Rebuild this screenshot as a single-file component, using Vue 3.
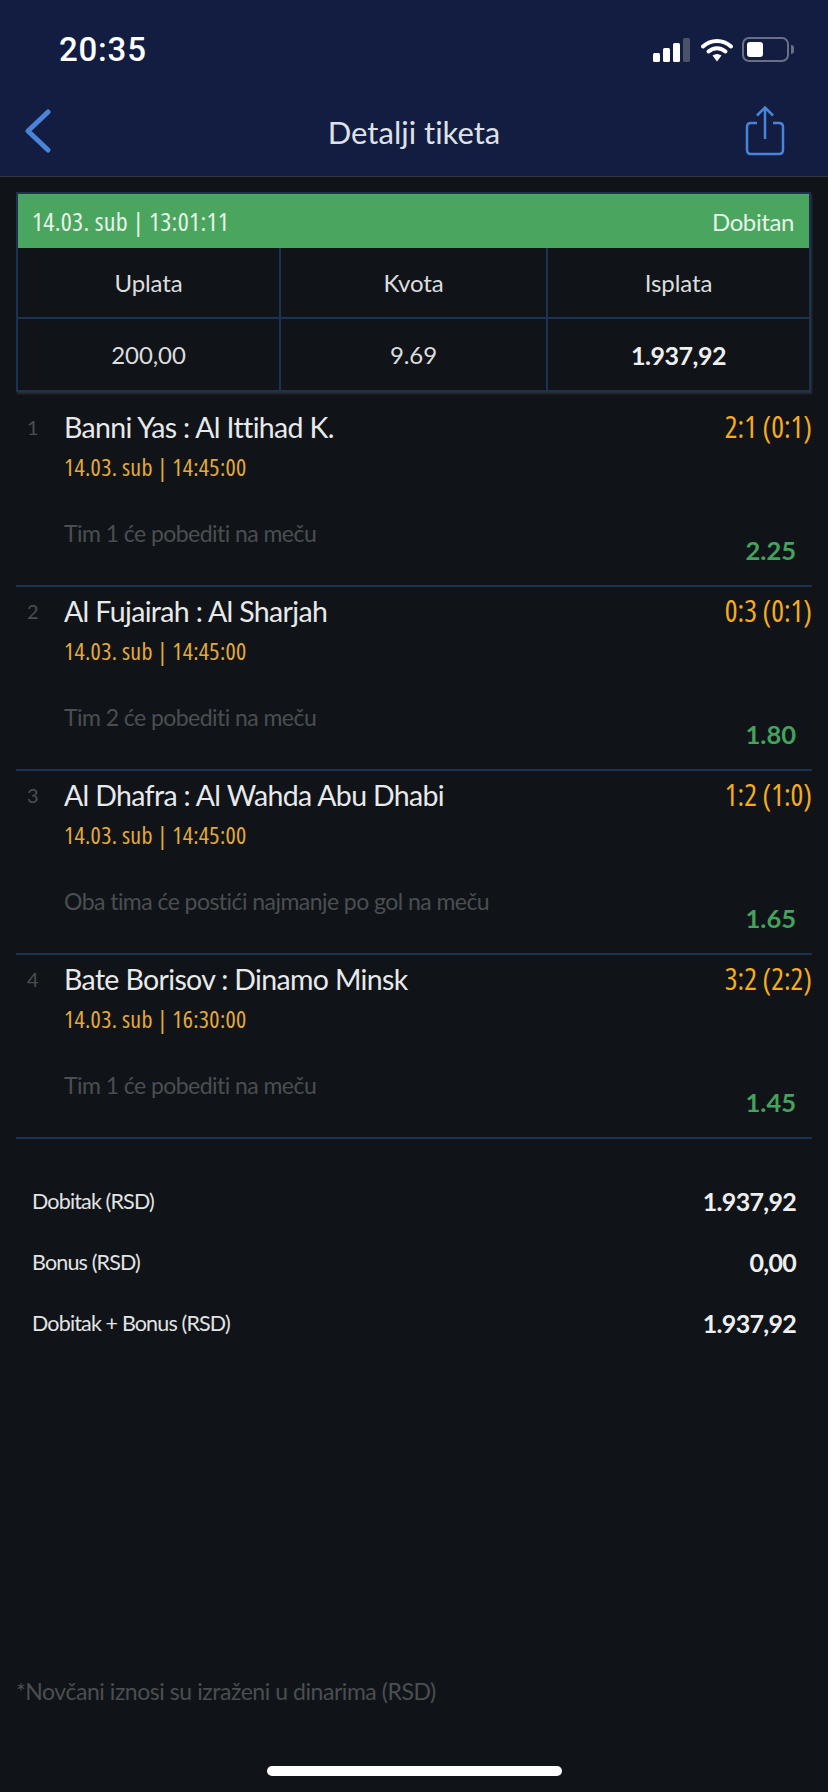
<template>
  <div class="page">
    <header class="header">
      <div class="status-bar">
        <span class="time">20:35</span>
        <div class="status-icons">
          <svg class="signal" width="38" height="24" viewBox="0 0 38 24">
            <rect x="0" y="15" width="7" height="9" rx="1.5" fill="#fff" />
            <rect x="10" y="10" width="7" height="14" rx="1.5" fill="#fff" />
            <rect x="20" y="5" width="7" height="19" rx="1.5" fill="#fff" />
            <rect x="30" y="0" width="7" height="24" rx="1.5" fill="#4a5268" />
          </svg>
          <svg class="wifi" width="32" height="24" viewBox="0 0 32 24">
            <path d="M2 8.500C10 1 22 1 30 8.500" fill="none" stroke="#fff" stroke-width="4" stroke-linecap="round" />
            <path d="M7.500 13.500C12.500 9 19.500 9 24.500 13.500" fill="none" stroke="#fff" stroke-width="4" stroke-linecap="round" />
            <path d="M11.500 17.500C14.500 15.500 17.500 15.500 20.500 17.500L16 23.500Z" fill="#fff" />
          </svg>
          <div class="battery">
            <div class="battery-fill"></div>
          </div>
          <div class="battery-nub"></div>
        </div>
      </div>
      <div class="nav-bar">
        <button class="nav-button">
          <svg width="28" height="44" viewBox="0 0 28 44">
            <path d="M24 3L4 22L24 41" fill="none" stroke="#4a84d8" stroke-width="5" stroke-linecap="round" stroke-linejoin="round" />
          </svg>
        </button>
        <h1 class="title">Detalji tiketa</h1>
        <button class="nav-button nav-button-right">
          <svg width="40" height="50" viewBox="0 0 40 50">
            <path d="M12 17H6Q2 17 2 21V44Q2 48 6 48H34Q38 48 38 44V21Q38 17 34 17H28" fill="none" stroke="#4a84d8" stroke-width="2.500" />
            <path d="M20 33V2M12 9.500L20 1.500L28 9.500" fill="none" stroke="#4a84d8" stroke-width="2.500" />
          </svg>
        </button>
      </div>
    </header>

    <main class="content">
      <section class="ticket">
        <div class="ticket-status">
          <span class="ticket-date">14.03. sub | 13:01:11</span>
          <span class="ticket-result">Dobitan</span>
        </div>
        <div class="ticket-grid">
          <div class="cell">Uplata</div>
          <div class="cell">Kvota</div>
          <div class="cell">Isplata</div>
          <div class="cell">200,00</div>
          <div class="cell">9.69</div>
          <div class="cell cell-bold">1.937,92</div>
        </div>
      </section>

      <section class="matches">
        <article v-for="(match, i) in matches" :key="match.name" class="match">
          <span class="match-index">{{ i + 1 }}</span>
          <div class="match-body">
            <div class="match-top">
              <span class="match-name">{{ match.name }}</span>
              <span class="match-score">{{ match.score }}</span>
            </div>
            <div class="match-date">{{ match.date }}</div>
            <div class="match-bottom">
              <span class="match-pick">{{ match.pick }}</span>
              <span class="match-odd">{{ match.odd }}</span>
            </div>
          </div>
        </article>
      </section>

      <section class="summary">
        <div v-for="row in summary" :key="row.label" class="summary-row">
          <span class="summary-label">{{ row.label }}</span>
          <span class="summary-value">{{ row.value }}</span>
        </div>
      </section>

      <p class="note">*Novčani iznosi su izraženi u dinarima (RSD)</p>
    </main>

    <div class="home-bar"></div>
  </div>
</template>

<script setup>
const matches = [
  { name: 'Banni Yas : Al Ittihad K.', score: '2:1 (0:1)', date: '14.03. sub | 14:45:00', pick: 'Tim 1 će pobediti na meču', odd: '2.25' },
  { name: 'Al Fujairah : Al Sharjah', score: '0:3 (0:1)', date: '14.03. sub | 14:45:00', pick: 'Tim 2 će pobediti na meču', odd: '1.80' },
  { name: 'Al Dhafra : Al Wahda Abu Dhabi', score: '1:2 (1:0)', date: '14.03. sub | 14:45:00', pick: 'Oba tima će postići najmanje po gol na meču', odd: '1.65' },
  { name: 'Bate Borisov : Dinamo Minsk', score: '3:2 (2:2)', date: '14.03. sub | 16:30:00', pick: 'Tim 1 će pobediti na meču', odd: '1.45' }
]

const summary = [
  { label: 'Dobitak (RSD)', value: '1.937,92' },
  { label: 'Bonus (RSD)', value: '0,00' },
  { label: 'Dobitak + Bonus (RSD)', value: '1.937,92' }
]
</script>

<style>
html,
body {
  margin: 0;
  background: #101418;
}
</style>

<style scoped>
.page {
  width: 828px;
  height: 1792px;
  display: flex;
  flex-direction: column;
  background: #101418;
  font-family: Lato, "Open Sans", sans-serif;
  font-variant-ligatures: none;
  color: #e8e9ea;
  overflow: hidden;
}

/* Digit strings are narrow in the original, condensed Open Sans is closest */
.ticket-date,
.match-date,
.match-score {
  font-family: "Open Sans", Lato, sans-serif;
  font-stretch: 80%;
}

/* Header */
.header {
  height: 177px;
  box-sizing: border-box;
  background: #121d41;
  border-bottom: 1px solid #33363c;
}

.status-bar {
  height: 100px;
  box-sizing: border-box;
  padding: 33px 34px 0 59px;
  display: flex;
  justify-content: space-between;
  align-items: flex-start;
}

.time {
  font-family: Roboto, sans-serif;
  font-size: 33px;
  line-height: 34px;
  font-weight: 500;
  color: #fff;
  letter-spacing: 0.8px;
}

.status-icons {
  display: flex;
  align-items: center;
  margin-top: 4px;
}

.wifi {
  margin-left: 10px;
}

.battery {
  width: 47px;
  height: 25px;
  margin-left: 9px;
  box-sizing: border-box;
  border: 2px solid #6a7084;
  border-radius: 7px;
  padding: 3px;
}

.battery-fill {
  width: 16px;
  height: 100%;
  background: #fff;
  border-radius: 3px;
}

.battery-nub {
  width: 3px;
  height: 9px;
  margin-left: 2px;
  background: #6a7084;
  border-radius: 0 3px 3px 0;
}

.nav-bar {
  display: grid;
  grid-template-columns: 1fr auto 1fr;
  align-items: center;
  padding: 6px 24px 0;
}

.nav-button {
  padding: 0;
  border: none;
  background: none;
  display: flex;
}

.nav-button-right {
  justify-self: end;
  margin-right: 19px;
}

.title {
  margin: 2px 0 0;
  font-size: 31px;
  font-weight: 400;
  color: #dfe1e8;
}

.content {
  flex: 1;
  display: flex;
  flex-direction: column;
  padding: 15px 16px 0;
}

/* Ticket table */
.ticket {
  width: 795px;
  box-sizing: border-box;
  border: 2px solid #1b3352;
  box-shadow: 1px 2px 2px #2c2f33;
}

.ticket-status {
  height: 54px;
  box-sizing: border-box;
  padding: 0 15px 0 14px;
  display: flex;
  justify-content: space-between;
  align-items: center;
  background: #4aa55e;
  color: #e6f3e9;
}

.ticket-date {
  font-size: 26px;
  letter-spacing: 0.3px;
}

.ticket-result {
  font-size: 24px;
  letter-spacing: -0.4px;
}

.ticket-grid {
  display: grid;
  grid-template-columns: 263px 267px 1fr;
  grid-auto-rows: 71px;
}

.cell {
  display: flex;
  align-items: center;
  justify-content: center;
  font-size: 24px;
  letter-spacing: -0.1px;
  color: #dcddde;
  border-right: 2px solid #1b3352;
  border-bottom: 2px solid #1b3352;
}

.cell:nth-child(3n) {
  border-right: none;
}

.cell:nth-child(n + 4) {
  border-bottom: none;
}

.cell-bold {
  font-size: 25px;
  font-weight: 700;
  letter-spacing: -0.5px;
  color: #eeeeee;
}

/* Matches */
.matches {
  margin-top: 11px;
}

.match {
  height: 184px;
  box-sizing: border-box;
  padding-top: 3px;
  display: flex;
  border-bottom: 2px solid #1b3352;
}

.match-index {
  width: 48px;
  padding: 6px 0 0 11px;
  box-sizing: border-box;
  font-size: 20px;
  line-height: 30px;
  color: #4b4e51;
}

.match-body {
  flex: 1;
}

.match-top {
  display: flex;
  justify-content: space-between;
  line-height: 42px;
}

.match-name {
  font-size: 28.500px;
  letter-spacing: -0.65px;
  color: #e8e9ea;
}

.match-score {
  font-size: 30px;
  color: #f5ab1e;
}

.match-date {
  margin-top: 4px;
  font-size: 24px;
  letter-spacing: 0.3px;
  line-height: 30px;
  color: #e5a93a;
}

.match-bottom {
  margin-top: 36px;
  padding-right: 16px;
  display: flex;
  justify-content: space-between;
  align-items: flex-start;
}

.match-pick {
  font-size: 23px;
  letter-spacing: -0.55px;
  line-height: 30px;
  color: #4b4e51;
}

.match-odd {
  margin-top: 17px;
  font-size: 25.500px;
  line-height: 30px;
  font-weight: 700;
  color: #44a25c;
}

/* Summary */
.summary {
  margin-top: 31px;
  padding: 0 16px;
}

.summary-row {
  height: 61px;
  display: flex;
  justify-content: space-between;
  align-items: center;
}

.summary-label {
  font-size: 21.500px;
  letter-spacing: -0.85px;
  color: #e2e3e4;
}

.summary-value {
  font-size: 25px;
  letter-spacing: -0.7px;
  font-weight: 700;
  color: #eeeeee;
}

.note {
  margin: auto 0 0;
  padding-bottom: 60px;
  font-size: 23px;
  letter-spacing: -0.45px;
  line-height: 30px;
  color: #4b4e51;
}

.home-bar {
  width: 295px;
  height: 10px;
  margin: 0 auto 16px;
  flex-shrink: 0;
  border-radius: 5px;
  background: #fff;
}
</style>
